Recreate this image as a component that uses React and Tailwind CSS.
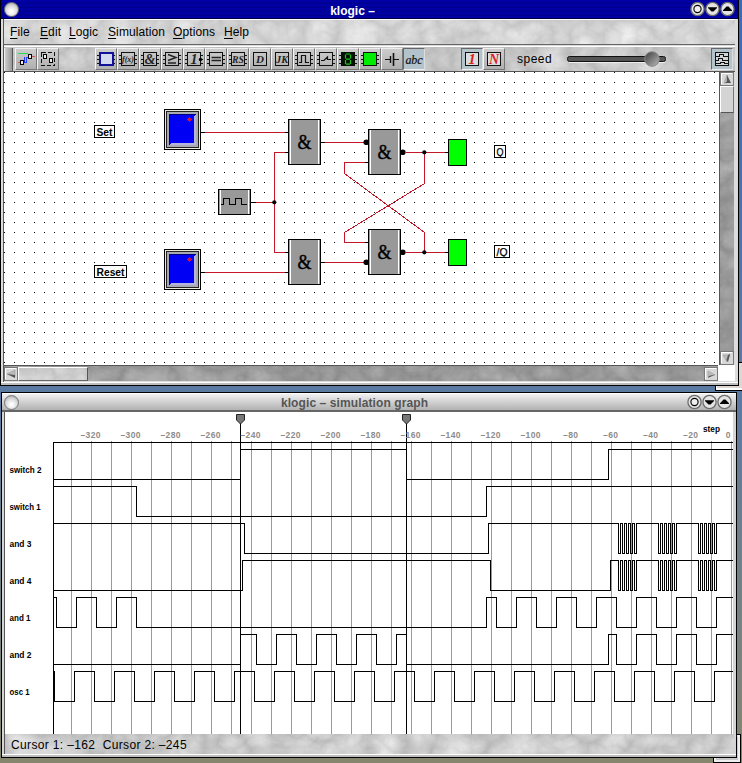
import React from "react";

const SANS = "font-['Liberation_Sans',Arial,sans-serif]";

function Marble({ id, base, seed = 3, amount = 0.22 }) {
  const row = `${amount} 0 0 0 ${base - amount * 0.28}`;
  return (
    <svg className="absolute inset-0 h-full w-full" aria-hidden="true">
      <filter id={id} x="0" y="0" width="100%" height="100%" colorInterpolationFilters="sRGB">
        <feTurbulence type="turbulence" baseFrequency="0.03 0.035" numOctaves="5" seed={seed} />
        <feColorMatrix values={`${row} ${row} ${row} 0 0 0 0 1`} />
      </filter>
      <rect width="100%" height="100%" filter={`url(#${id})`} />
    </svg>
  );
}

function Ball() {
  return (
    <div className="h-[15px] w-[15px] rounded-full border border-[#777] bg-[radial-gradient(circle_at_50%_65%,#ffffff_10%,#d8d8d8_55%,#909090_100%)]" />
  );
}

function TitleButton({ kind }) {
  return (
    <svg width="15" height="16" viewBox="0 0 15 16">
      <circle cx="7.5" cy="8" r="6.6" fill="#e4e4e4" stroke="#6c6c6c" strokeWidth="1.3" />
      {kind === "dot" && <circle cx="7.5" cy="8" r="3.6" fill="#eee" stroke="#000" strokeWidth="1.1" />}
      {kind === "down" && <path d="M3 6.2H12V7L8.5 10.5H6.5L3 7Z" fill="#000" />}
      {kind === "up" && <path d="M3 10H12V9.2L8.5 5.5H6.5L3 9.2Z" fill="#000" />}
    </svg>
  );
}

function Glyph({ children, size = 11, color = "#222", y = 15.2, w }) {
  return (
    <text x="11" y={y} textAnchor="middle" textLength={w} lengthAdjust="spacingAndGlyphs" fontFamily="Liberation Serif, serif" fontStyle="italic" fontWeight="bold" fontSize={size} fill={color}>
      {children}
    </text>
  );
}

function Pins() {
  return <path d="M2 7.5H4M2 11.5H4M2 15.5H4M18 7.5H20M18 11.5H20M18 15.5H20" stroke="#111" />;
}

function Chip({ pins = true, fill = "none" }) {
  return (
    <g shapeRendering="crispEdges">
      {pins && <Pins />}
      <rect x="4.5" y="4.5" width="13" height="13" fill={fill} stroke="#111" />
    </g>
  );
}

function ToolButton({ pressed, children }) {
  return (
    <div
      className={
        pressed
          ? "h-[22px] w-[22px] border border-t-[#666] border-r-[#ddd] border-b-[#eee] border-l-[#666] bg-[#b3c3cc]"
          : "h-[22px] w-[22px] border border-t-[#eee] border-r-[#777] border-b-[#777] border-l-[#f4f4f4] bg-linear-to-b from-[#cdcdcd] to-[#b0b0b0]"
      }
    >
      <svg width="22" height="22" viewBox="0 0 22 22" className="-mt-px -ml-px block">
        {children}
      </svg>
    </div>
  );
}

function Toolbar() {
  return (
    <div className="relative h-[26px] border-t border-b border-t-white border-b-[#555]">
      <Marble id="mTool" base={0.77} seed={7} />
      <div className="relative flex h-[24px] items-center">
        <div className="h-[23px] w-[9px] border-r border-l border-r-[#555] border-l-[#eee] bg-linear-to-r from-[#ccc] to-[#999]" />
        <div className="ml-[2px] flex">
          <ToolButton>
            <g fill="none" shapeRendering="crispEdges">
              <path d="M3 5.5H13" stroke="#22dd55" />
              <path d="M9.5 9V15" stroke="#2233ff" />
              <path d="M3 14.5H5M17 8.5H20" stroke="#cc5555" />
              <path d="M9 14.5H11V9.500H13" stroke="#2244ff" />
              <rect x="5.5" y="12.5" width="3" height="4" fill="#eee" stroke="#000" />
              <rect x="13.5" y="6.5" width="3" height="4" fill="#eee" stroke="#000" />
            </g>
          </ToolButton>
          <ToolButton>
            <g shapeRendering="crispEdges">
              <rect x="4.5" y="4.5" width="13" height="13" fill="none" stroke="#111" strokeDasharray="4 2" />
              <rect x="6.5" y="6.5" width="3" height="4" fill="#eee" stroke="#000" />
              <rect x="12.5" y="10.5" width="3" height="4" fill="#eee" stroke="#000" />
            </g>
          </ToolButton>
        </div>
        <div className="ml-[36px] flex">
          <ToolButton>
            <Pins />
            <rect x="5" y="5" width="13" height="12" fill="#d2d9ee" stroke="#10109a" strokeWidth="2" />
          </ToolButton>
          <ToolButton><Chip /><Glyph size={9} y={14} w={12}>f(x)</Glyph></ToolButton>
          <ToolButton><Chip /><Glyph size={14} y={15.7}>&amp;</Glyph></ToolButton>
          <ToolButton><Chip /><path d="M7 6.5L15 9.5L7 12.5M7 15H15" fill="none" stroke="#222" strokeWidth="1.4" /></ToolButton>
          <ToolButton><Chip /><Glyph size={14} y={15.7}>1</Glyph><circle cx="17.5" cy="11.5" r="1.7" /></ToolButton>
          <ToolButton><Chip /><path d="M6.500 9.500H16M6.500 12.500H16" stroke="#222" strokeWidth="1.300" /></ToolButton>
          <ToolButton><Chip /><Glyph size={10} y={14.6} w={12}>RS</Glyph></ToolButton>
          <ToolButton><Chip pins={false} /><Glyph size={11} y={14.8}>D</Glyph></ToolButton>
          <ToolButton><Chip pins={false} /><Glyph size={11} y={14.8} w={12}>JK</Glyph></ToolButton>
          <ToolButton><Chip /><path d="M6 14.5H8.5V7.5H12.5V14.5H16" fill="none" stroke="#111" strokeWidth="1.2" /></ToolButton>
          <ToolButton><Chip /><path d="M6 12.5H9L12.500 9V11.500H16" fill="none" stroke="#111" strokeWidth="1.2" /></ToolButton>
          <ToolButton>
            <Pins />
            <rect x="4" y="4" width="14" height="14" fill="#041004" />
            <path d="M8.5 6.500V10.500M13.5 6.500V10.500M8.5 12V16M13.5 12V16M9 6H13M9 11.2H13M9 16.2H13" stroke="#19c519" strokeWidth="1.2" />
          </ToolButton>
          <ToolButton>
            <Pins />
            <rect x="4.5" y="4.5" width="13" height="13" fill="#00ec00" stroke="#111" />
          </ToolButton>
          <ToolButton>
            <path d="M4 11.5H9M13 11.5H18" stroke="#111" strokeWidth="1.2" />
            <path d="M9.5 8V15" stroke="#111" strokeWidth="1.4" />
            <path d="M12.5 5V18" stroke="#111" strokeWidth="1.6" />
          </ToolButton>
          <ToolButton pressed>
            <text x="11" y="15.5" textAnchor="middle" fontFamily="Liberation Serif, serif" fontStyle="italic" fontSize="12" fill="#111" stroke="#111" strokeWidth="0.2" textLength="17">abc</text>
          </ToolButton>
        </div>
        <div className="ml-[36px] flex">
          <ToolButton pressed><Chip pins={false} fill="#d9dde0" /><Glyph size={15} y={16} color="#dd1c1c">1</Glyph></ToolButton>
          <ToolButton><Chip pins={false} fill="#ddd" /><Glyph size={14} y={15.7} color="#dd1c2c">N</Glyph></ToolButton>
        </div>
        <span className={`${SANS} ml-[12px] w-[50px] text-[12px] leading-[22px] tracking-[0.5px] text-black`}>speed</span>
        <svg width="102" height="22" viewBox="0 0 102 22">
          <rect x="0.5" y="8.5" width="98" height="5" rx="2" fill="#555" stroke="#111" />
          <path d="M2 14.5H98" stroke="#eee" />
          <defs>
            <linearGradient id="knob" x1="0" y1="0" x2="1" y2="1">
              <stop offset="0.2" stopColor="#555" />
              <stop offset="1" stopColor="#bbb" />
            </linearGradient>
          </defs>
          <circle cx="85" cy="11" r="7.3" fill="url(#knob)" stroke="#888" />
        </svg>
        <div className="mr-[2px] ml-auto">
          <ToolButton pressed>
            <g shapeRendering="crispEdges" fill="none" stroke="#111">
              <rect x="4.5" y="4.5" width="13" height="13" fill="#cfd6da" />
              <path d="M5 8.5H8.5V6.5H12.5V8.5H17M5 12.5H7.5V10.5H11.5V12.5H17M5 15.5H9.5V14.5H13.5V15.5H17" />
            </g>
          </ToolButton>
        </div>
      </div>
    </div>
  );
}

const MENU = [
  ["F", "ile", "w-[30px]"],
  ["E", "dit", "w-[29px]"],
  ["L", "ogic", "w-[39px]"],
  ["S", "imulation", "w-[65px]"],
  ["O", "ptions", "w-[51px]"],
  ["H", "elp", "w-[30px]"],
];

function Gate({ x, y }) {
  return (
    <g>
      <g shapeRendering="crispEdges">
        <rect x={x + 0.5} y={y + 0.5} width="32" height="45" fill="#999" stroke="#000" />
        <path d={`M${x + 2.5} ${y + 1}V${y + 45}M${x + 30.5} ${y + 1}V${y + 45}`} stroke="#fff" />
      </g>
      <text x={x + 16.5} y={y + 30} textAnchor="middle" textLength="14" lengthAdjust="spacingAndGlyphs" fontFamily="Liberation Serif, serif" fontSize="21" fill="#000" stroke="#000" strokeWidth="0.4">&amp;</text>
    </g>
  );
}

function Switch({ x, y }) {
  return (
    <g shapeRendering="crispEdges">
      <rect x={x} y={y} width="37" height="41" fill="#000" />
      <rect x={x + 1} y={y + 1} width="35" height="39" fill="#e9e6da" />
      <rect x={x + 2} y={y + 2} width="33" height="37" fill="#222" />
      <rect x={x + 3} y={y + 3} width="31" height="35" fill="#a9a9b4" />
      <rect x={x + 5} y={y + 5} width="27" height="31" fill="#00007c" />
      <rect x={x + 6} y={y + 6} width="25" height="29" fill="#0000f4" />
      <path d={`M${x + 32} ${y + 5}V${y + 36}H${x + 5}L${x + 7} ${y + 34}H${x + 30}V${y + 7}Z`} fill="#b4b4dc" />
      <path d={`M${x + 25.5} ${y + 8}V${y + 13}M${x + 23} ${y + 10.5}H${x + 28}`} stroke="#d01040" strokeWidth="1" />
      <rect x={x + 24} y={y + 9} width="3" height="3" fill="#d01040" />
    </g>
  );
}

function Tag({ x, y, w, bold, children }) {
  return (
    <g>
      <rect x={x + 0.5} y={y + 0.5} width={w - 1} height="12" fill="#fff" stroke="#000" shapeRendering="crispEdges" />
      <text x={x + w / 2} y={y + 10.5} textAnchor="middle" fontFamily="Liberation Sans, Arial, sans-serif" fontWeight={bold ? "bold" : "normal"} stroke="#000" strokeWidth={bold ? 0 : 0.25} fontSize="10.5" textLength={w - 5} lengthAdjust="spacingAndGlyphs">{children}</text>
    </g>
  );
}

function Schematic() {
  return (
    <svg width="715" height="293" viewBox="4 72 715 293" className="block bg-white">
      <defs>
        <pattern id="dots" x="4" y="72" width="10" height="10" patternUnits="userSpaceOnUse">
          <rect width="1" height="1" fill="#000" />
        </pattern>
      </defs>
      <rect x="4" y="72" width="715" height="293" fill="url(#dots)" />
      <g transform="translate(.5 .5)" fill="none" shapeRendering="crispEdges">
        <path stroke="#c4182a" d="M204 132H284M204 272H284M255 202H274M284 152H274V252H284M324 142H364M324 262H364M405 152H444M405 252H444M364 162H344V173L424 232V252M364 242H344V232L424 183V152" />
        <path stroke="#000" d="M200 132H204M284 132H288M200 272H204M284 272H288M250 202H255M284 152H288M284 252H288M320 142H324M320 262H324M364 162H368M364 242H368M444 152H448M444 252H448" />
      </g>
      {[[366, 142], [366, 262], [402.5, 152], [402.5, 252]].map(([x, y]) => (
        <circle key={`${x}-${y}`} cx={x + 0.3} cy={y + 0.2} r="2.8" />
      ))}
      {[[274, 202], [424, 152], [424, 252]].map(([x, y]) => (
        <circle key={`${x}-${y}`} cx={x + 0.3} cy={y + 0.3} r="2.1" />
      ))}
      <Switch x={164} y={109} />
      <Switch x={164} y={249} />
      <Gate x={288} y={119} />
      <Gate x={288} y={239} />
      <Gate x={368} y={129} />
      <Gate x={368} y={229} />
      <g shapeRendering="crispEdges">
        <rect x="218.5" y="189.5" width="32" height="25" fill="#999" stroke="#000" />
        <path d="M220.5 190V214M248.5 190V214" stroke="#fff" />
        <path d="M221 204.5H223.5V198.500H229.5V204.5H235.5V198.5H241.5V204.5H247" fill="none" stroke="#000" />
        <rect x="448.5" y="139.5" width="18" height="26" fill="#0f0" stroke="#000" />
        <rect x="448.5" y="239.5" width="18" height="26" fill="#0f0" stroke="#000" />
      </g>
      <Tag x={94} y={125} w={21} bold>Set</Tag>
      <Tag x={94} y={265} w={33} bold>Reset</Tag>
      <Tag x={494} y={145} w={12}>Q</Tag>
      <Tag x={494} y={245} w={16}>/Q</Tag>
    </svg>
  );
}

function ScrollArrow({ light, dark }) {
  return (
    <svg width="14" height="14" viewBox="0 0 14 14" className="block shrink-0">
      <rect x="0.5" y="0.5" width="13" height="13" fill="#d8d8d8" stroke="#777" />
      <path d="M1.5 12V1.5H12" stroke="#fff" fill="none" />
      <path d={light} fill="#bbb" stroke="#999" strokeWidth="0.6" />
      <path d={dark} fill="#555" />
    </svg>
  );
}

function wave(top, startHigh, edges) {
  let high = startHigh;
  let d = `M53 ${high ? top : top + 30}`;
  edges.forEach((x) => {
    high = !high;
    d += `H${x}V${high ? top : top + 30}`;
  });
  return d + "H732";
}

const steps = (from, to, by) => {
  const out = [];
  for (let x = from; x <= to; x += by) out.push(x);
  return out;
};

const BURSTS = [...steps(618, 636, 2), ...steps(658, 676, 2), ...steps(698, 716, 2)];

const SIGNALS = [
  { name: "switch 2", w: 32, top: 449, high: false, edges: [240, 406, 608] },
  { name: "switch 1", w: 31, top: 486, high: true, edges: [136, 486] },
  { name: "and 3", w: 22, top: 523, high: true, edges: [244, 488, ...BURSTS] },
  { name: "and 4", w: 22, top: 560, high: false, edges: [242, 490, 610, ...BURSTS] },
  { name: "and 1", w: 21, top: 597, high: true, edges: [...steps(56, 136, 20), 486, ...steps(496, 716, 20)] },
  { name: "and 2", w: 22, top: 634, high: false, edges: [240, ...steps(256, 396, 20), 406, 608, ...steps(616, 716, 20)] },
  { name: "osc 1", w: 20, top: 671, high: true, edges: steps(54, 714, 20) },
];

function Graph() {
  return (
    <svg width="728" height="322" viewBox="5 412 728 322" className="block bg-white" fontFamily="Liberation Sans, Arial, sans-serif" fontWeight="bold">
      <g fill="none" shapeRendering="crispEdges" transform="translate(.5 .5)">
        <path stroke="#999" d={steps(71, 731, 20).map((x) => `M${x} 440V734`).join("")} />
        <path stroke="#000" d="M53 734V442H732" />
        {SIGNALS.map((s) => (
          <path key={s.name} stroke="#000" d={wave(s.top, s.high, s.edges)} />
        ))}
        <path stroke="#000" d="M240 420V734M406 420V734" />
      </g>
      {[240, 406].map((x) => (
        <path key={x} d={`M${x - 3.5} 414.5H${x + 4.5}V420L${x + 0.5} 424L${x - 3.5} 420Z`} fill="#777" stroke="#222" />
      ))}
      {steps(-320, -20, 20).map((v) => (
        <text key={v} x={730.5 + v * 2} y="438" textAnchor="middle" fontSize="8.5" fill="#8c8c8c" textLength={v > -100 ? 15 : 20}>{`–${-v}`}</text>
      ))}
      <text x="728" y="438" textAnchor="middle" fontSize="8.5" fill="#8c8c8c">0</text>
      <text x="703" y="432" fontSize="9" textLength="17" lengthAdjust="spacingAndGlyphs">step</text>
      {SIGNALS.map((s) => (
        <text key={s.name} x="9.5" y={s.top + 24} fontSize="9" textLength={s.w} lengthAdjust="spacingAndGlyphs">{s.name}</text>
      ))}
    </svg>
  );
}

export default function App() {
  return (
    <div className="relative h-[763px] w-[742px] overflow-hidden bg-linear-to-b from-[#3c68b8] via-[#5a7aa2] to-[#86866e]">
      <div className="absolute top-[362px] left-[715px] h-[29px] w-[40px] border border-black bg-[#ddd6d2] shadow-[inset_1px_-2px_0_#fff]" />
      <div className="absolute top-[734px] left-[713px] h-[29px] w-[28px] border border-black bg-[#c8c8c8] shadow-[inset_0_0_0_2px_#eee]" />
      <div className="relative flex flex-col">
        <section className="flex h-[386px] w-[739px] flex-col border-r border-b border-l border-black bg-[#dcdcdc]">
          <header className="flex h-[19px] items-center border-b border-[#000040] bg-[repeating-linear-gradient(#0000a4_0px,#0000a4_2px,#000090_3px,#000090_4px)] pr-[3px] pl-[3px]">
            <Ball />
            <h1 className={`${SANS} flex-1 pt-[3px] pr-[4px] text-center text-[12px] leading-[16px] font-bold text-white`}>klogic –</h1>
            <TitleButton kind="dot" />
            <TitleButton kind="down" />
            <TitleButton kind="up" />
          </header>
          <div className="mr-[3px] ml-[2px] flex h-[363px] flex-col border-l border-[#555]">
            <nav className="relative mb-[2px] h-[26px] border-t border-b border-t-white border-b-[#666]">
              <Marble id="mMenu" base={0.82} seed={4} />
              <div className={`${SANS} relative flex pl-[6px] text-[12px] leading-[25px] tracking-[0.1px] text-black`}>
                {MENU.map(([k, rest, w]) => (
                  <span key={k} className={`${w} shrink-0 whitespace-nowrap`}>
                    <span className="underline underline-offset-2">{k}</span>
                    {rest}
                  </span>
                ))}
              </div>
            </nav>
            <div className="-mt-px">
              <Toolbar />
            </div>
            <div className="flex h-[293px]">
              <Schematic />
              <div className="relative flex w-[15px] flex-col items-center border-l border-[#555] bg-[#999]">
                <Marble id="mV" base={0.6} seed={9} />
                <div className="relative flex h-full flex-col">
                  <ScrollArrow light="M7 3L4 11H7Z" dark="M7 3L11 11H5L7 9.500Z" />
                  <div className="h-[27px] w-[14px] border border-t-white border-r-[#777] border-b-[#555] border-l-white bg-[#d4d4d4]" />
                  <div className="mt-auto">
                    <ScrollArrow light="M3 4H10L7 11Z" dark="M10 3L8 11L6.500 9L8 4Z" />
                  </div>
                </div>
              </div>
            </div>
            <div className="flex h-[16px] bg-white">
              <div className="relative flex w-[714px] items-center border-t border-[#555]">
                <Marble id="mH" base={0.6} seed={12} />
                <div className="relative flex w-full items-center">
                  <ScrollArrow light="M3 7L11 3V10Z" dark="M3 7L11 8V11Z" />
                  <div className="relative h-[14px] w-[70px] border border-t-white border-r-[#555] border-b-[#666] border-l-white">
                    <Marble id="mThumb" base={0.81} seed={2} />
                  </div>
                  <div className="ml-auto">
                    <ScrollArrow light="M4 4L11 8L4 10Z" dark="M11 7.500L4 11L5 9Z" />
                  </div>
                </div>
              </div>
            </div>
          </div>
          <div className="h-[3px] border-t border-t-white bg-[#bdbdbd]" />
        </section>
        <section className="mt-[6px] ml-[1px] flex h-[366px] w-[736px] flex-col border border-black bg-[#d4d4d4]">
          <header className="flex h-[19px] items-center border-t border-b-2 border-t-white border-b-[#666] bg-linear-to-b from-[#f0f0f0] to-[#b2b2b2] pr-[4px] pl-[2px]">
            <Ball />
            <h2 className={`${SANS} flex-1 pt-[2px] pl-[3px] text-center text-[12px] leading-[16px] font-bold tracking-[0.1px] text-[#555]`}>klogic – simulation graph</h2>
            <TitleButton kind="dot" />
            <TitleButton kind="down" />
            <TitleButton kind="up" />
          </header>
          <main className="mr-[2px] ml-[2px] border-l border-[#555]">
            <Graph />
            <footer className="relative h-[20px]">
              <Marble id="mStatus" base={0.77} seed={5} />
              <p className={`${SANS} relative pl-[6px] text-[12px] leading-[22px] tracking-[0.35px] whitespace-pre text-black`}>Cursor 1: –162  Cursor 2: –245</p>
            </footer>
          </main>
          <div className="h-[3px] border-t border-t-white bg-[#bdbdbd]" />
        </section>
      </div>
    </div>
  );
}
